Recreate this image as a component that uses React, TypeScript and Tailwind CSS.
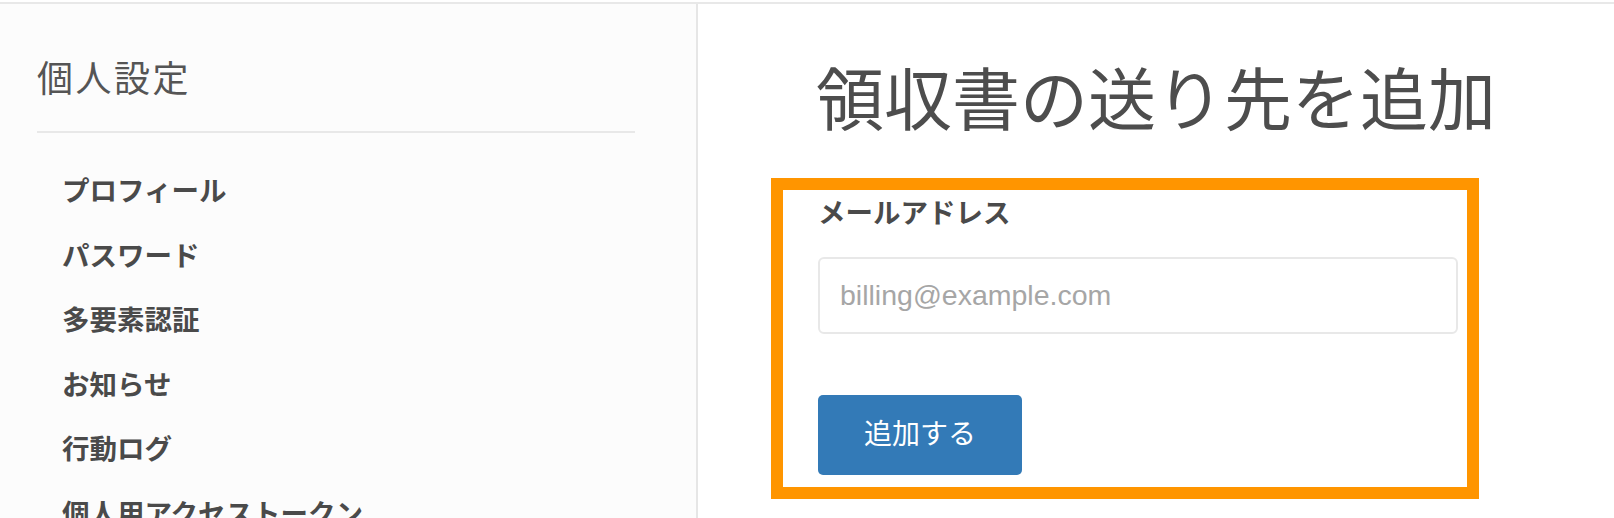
import React from "react";

const navItems = [
  "プロフィール",
  "パスワード",
  "多要素認証",
  "お知らせ",
  "行動ログ",
  "個人用アクセストークン",
];

export default function App() {
  return (
    <div
      className="w-full h-[518px] overflow-hidden bg-white text-[#4d4d4d] flex flex-col"
      style={{ fontFamily: '"Liberation Sans", "Noto Sans CJK JP", sans-serif' }}
    >
      <div className="h-[2px] bg-white shrink-0" />
      <div className="h-[2px] bg-[#e8e8e8] shrink-0" />
      <div className="flex flex-1 min-h-0">
        {/* Sidebar */}
        <aside className="w-[698px] shrink-0 bg-[#fcfcfc] border-r-2 border-[#e6e6e6] pl-[37px] pr-[61px] pt-[54px]">
          <h2 className="text-[36px] leading-[44px] font-normal tracking-[2.5px] text-[#555555]">
            個人設定
          </h2>
          <div className="mt-[29px] h-[2px] bg-[#e8e8e8]" />
          <nav className="mt-[27px] flex flex-col">
            {navItems.map((item) => (
              <a
                key={item}
                href="#"
                className="pl-[25px] text-[27.5px] leading-[64.6px] font-bold text-[#4a4a4a] whitespace-nowrap"
              >
                {item}
              </a>
            ))}
          </nav>
        </aside>

        {/* Main */}
        <main className="flex-1 bg-white pt-[57px]">
          <h1 className="text-center text-[68px] leading-[80px] font-normal text-[#4d4d4d] whitespace-nowrap">
            領収書の送り先を追加
          </h1>
          <div className="mt-[37px] ml-[73px] w-[708px] border-[12px] border-[#ff9500] pl-[35px] pr-[9px] pt-[8px] pb-[12px]">
            <label className="block text-[27.5px] leading-[32px] font-bold text-[#4a4a4a]">
              メールアドレス
            </label>
            <input
              type="email"
              placeholder="billing@example.com"
              className="mt-[27px] block w-full h-[77px] rounded-[6px] border-2 border-[#e8e8e8] bg-white px-[20px] text-[28.5px] text-[#4d4d4d] placeholder:text-[#a6a6a6] outline-none"
            />
            <button
              type="button"
              className="mt-[61px] block w-[204px] h-[80px] rounded-[5px] bg-[#337ab7] text-white text-[28px] leading-[32px]"
            >
              追加する
            </button>
          </div>
        </main>
      </div>
    </div>
  );
}
